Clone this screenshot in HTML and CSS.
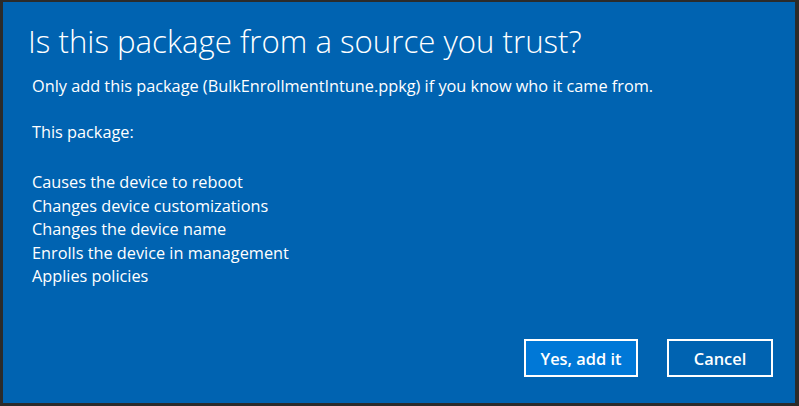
FILE: index.html
```html
<!DOCTYPE html>
<html lang="en">
<head>
    <meta charset="UTF-8">
    <link rel="stylesheet" href="styles.css">
    <title>Add package</title>
</head>
<body>
<div class="dialog">
    <div class="content">
        <h1 class="title">Is this package from a source you trust?</h1>
        <p class="message">Only add this package (BulkEnrollmentIntune.ppkg) if you know who it came from.</p>
        <p class="message">This package:</p>
        <ul class="actions">
            <li>Causes the device to reboot</li>
            <li>Changes device customizations</li>
            <li>Changes the device name</li>
            <li>Enrolls the device in management</li>
            <li>Applies policies</li>
        </ul>
    </div>
    <div class="buttons">
        <button class="btn primary">Yes, add it</button>
        <button class="btn">Cancel</button>
    </div>
</div>
</body>
</html>
```
FILE: styles.css
```css
html, body {
    margin: 0;
    padding: 0;
    background: #2b2b2b;
}
.dialog {
    box-sizing: border-box;
    width: 799px;
    height: 406px;
    border-style: solid;
    border-color: #2b2b2b;
    border-width: 2px 4px 3px 3px;
    background: #0063b1;
    color: #fff;
    font-family: "Open Sans", "Noto Sans", sans-serif;
    display: flex;
    flex-direction: column;
}
.content {
    flex: 1;
    padding: 18px 0 0 25px;
}
.title {
    margin: 0;
    font-size: 31.2px;
    font-weight: 300;
    line-height: 42px;
}
.message {
    margin: 12px 0 0 4px;
    font-size: 16.3px;
    line-height: 24px;
}
.message + .message {
    margin-top: 22px;
}
.actions {
    list-style: none;
    margin: 27px 0 0 4px;
    padding: 0;
    font-size: 16.3px;
    line-height: 23.5px;
}
.buttons {
    display: flex;
    justify-content: flex-end;
    gap: 29px;
    padding: 0 22px 26px 0;
}
.btn {
    box-sizing: border-box;
    height: 38px;
    border: 2px solid #fff;
    background: transparent;
    color: #fff;
    font-family: "Open Sans", "Noto Sans", sans-serif;
    font-size: 16.4px;
    font-weight: 600;
    width: 106px;
    padding: 0;
}
.btn.primary {
    width: 114px;
    background: #0078d7;
}
```
